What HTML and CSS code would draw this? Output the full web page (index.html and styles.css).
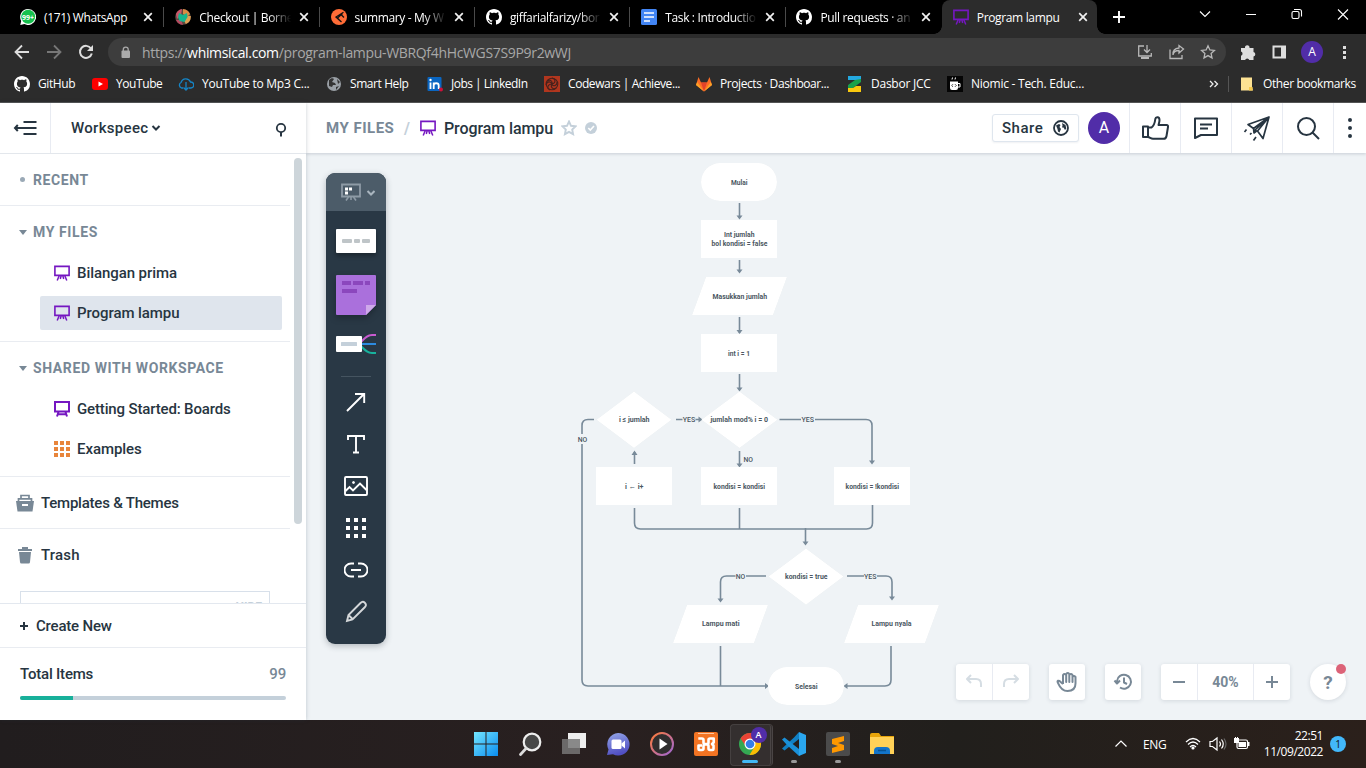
FILE: index.html
```html
<!DOCTYPE html>
<html lang="en">
<head>
<meta charset="utf-8">
<title>Program lampu</title>
<link rel="stylesheet" href="styles.css">
</head>
<body>
<svg class="defs" width="0" height="0">
  <symbol id="x" viewBox="0 0 16 16"><path d="M4.2 4.2l7.6 7.6M11.8 4.2l-7.6 7.6" stroke="#f1f1f1" stroke-width="1.7"/></symbol>
  <symbol id="github" viewBox="0 0 16 16"><path fill="#fff" d="M8 0C3.58 0 0 3.58 0 8c0 3.54 2.29 6.53 5.47 7.59.4.07.55-.17.55-.38 0-.19-.01-.82-.01-1.49-2.01.37-2.53-.49-2.69-.94-.09-.23-.48-.94-.82-1.13-.28-.15-.68-.52-.01-.53.63-.01 1.08.58 1.23.82.72 1.21 1.87.87 2.33.66.07-.52.28-.87.51-1.07-1.78-.2-3.64-.89-3.64-3.95 0-.87.31-1.59.82-2.15-.08-.2-.36-1.02.08-2.12 0 0 .67-.21 2.2.82.64-.18 1.32-.27 2-.27s1.36.09 2 .27c1.53-1.04 2.2-.82 2.2-.82.44 1.1.16 1.92.08 2.12.51.56.82 1.27.82 2.15 0 3.07-1.87 3.75-3.65 3.95.29.25.54.73.54 1.48 0 1.07-.01 1.93-.01 2.2 0 .21.15.46.55.38A8.01 8.01 0 0 0 16 8c0-4.42-3.58-8-8-8z"/></symbol>
  <symbol id="board" viewBox="0 0 16 16"><path d="M.9 1.4h14.2v9H.9z" fill="none" stroke="#7517c1" stroke-width="1.6"/><path d="M5.3 10.5L3.2 15.500M7.200 10.5l-.9 3.500M8.800 10.5l.9 3.500M10.7 10.5l2.1 5" stroke="#7517c1" stroke-width="1.5"/></symbol>
</svg>

<header class="browser">
  <div class="tabs">
    <div class="tab"><svg class="fav" viewBox="0 0 16 16"><path d="M8 0a8 8 0 1 1-3.6 15.1L.3 16l.9-4A8 8 0 0 1 8 0z" fill="#fff"/><circle cx="8.2" cy="7.8" r="7" fill="#16c04e"/><text x="8.1" y="10.6" font-size="7.5" font-weight="700" text-anchor="middle" fill="#fff" textLength="12" lengthAdjust="spacingAndGlyphs">99+</text></svg><span class="t1">(171) WhatsApp</span><svg class="close"><use href="#x"/></svg></div>
    <div class="tab"><svg class="fav" viewBox="0 0 16 16"><circle cx="8" cy="8" r="7.8" fill="#5c4a40"/><path d="M1 5a8 8 0 0 1 6-5l-1 6-4 4z" fill="#c9566a"/><path d="M8 0a8 8 0 0 1 7 5l-3 3-4-3z" fill="#d98b44"/><path d="M15.8 7a8 8 0 0 1-5 8l-2-4 4-4z" fill="#dfa155"/><path d="M1 11l5 0 2 5a8 8 0 0 1-7-5z" fill="#b44a60"/><path d="M4 4l4 2 4-2 .5 4-3 5-5-1-1.500-4z" fill="#16b58e"/></svg><span>Checkout | Borne</span><svg class="close"><use href="#x"/></svg></div>
    <div class="tab"><svg class="fav" viewBox="0 0 16 16"><circle cx="8" cy="8" r="8" fill="#ff6c37"/><path d="M12.500 3.300L5 8l5.500 5M11.500 4.500L6.500 9l2 2.200M10 5.500l3 3" fill="none" stroke="#111" stroke-width="1.300"/></svg><span>summary - My W</span><svg class="close"><use href="#x"/></svg></div>
    <div class="tab"><svg class="fav"><use href="#github"/></svg><span>giffarialfarizy/bor</span><svg class="close"><use href="#x"/></svg></div>
    <div class="tab"><svg class="fav" viewBox="0 0 16 16"><rect width="16" height="16" rx="1.500" fill="#4285f4"/><path d="M3 4h10M3 8h10M3 12h6" stroke="#fff" stroke-width="1.700"/></svg><span>Task : Introductio</span><svg class="close"><use href="#x"/></svg></div>
    <div class="tab"><svg class="fav"><use href="#github"/></svg><span>Pull requests · an</span><svg class="close"><use href="#x"/></svg></div>
    <div class="tab active"><svg class="fav"><use href="#board"/></svg><span>Program lampu</span><svg class="close"><use href="#x"/></svg></div>
    <svg class="plus" viewBox="0 0 14 14"><path d="M7 1v12M1 7h12" stroke="#fff" stroke-width="1.900"/></svg>
    <svg class="wincontrols" width="156" height="28" viewBox="0 0 156 28"><g fill="none" stroke="#fff" stroke-width="1.100"><path d="M4 11.500l5 5 5-5M50 14.500h10"/><rect x="96" y="11.500" width="7" height="7" rx="1.500"/><path d="M98 9.500h5.500a2 2 0 0 1 2 2v5"/><path d="M142 9.500l10 10M152 9.500l-10 10"/></g></svg>
  </div>
  <div class="toolbar">
    <svg class="nav" width="108" height="36" viewBox="0 0 108 36"><g fill="none" stroke="#dedede" stroke-width="1.800"><path d="M29 18H16M22 11.500L15.500 18l6.500 6.500"/><path d="M47 18h13M54 11.500l6.500 6.500-6.500 6.500" stroke="#777"/><path d="M91 14.500a6 6 0 1 0 .8 5" stroke-width="2"/></g><path d="M93 11v6h-6z" fill="#dedede"/></svg>
    <div class="omnibox">
      <svg width="10" height="13" viewBox="0 0 10 13"><rect x=".5" y="4.500" width="8.500" height="7.500" rx="1" fill="#aaa"/><path d="M2.300 5V3.500a2.400 2.400 0 0 1 4.900 0V5" fill="none" stroke="#aaa" stroke-width="1.300"/></svg>
      <div class="url">https://<b>whimsical.com</b>/program-lampu-WBRQf4hHcWGS7S9P9r2wWJ</div>
      <svg width="86" height="16" viewBox="0 0 86 16"><g fill="none" stroke="#b8b8b8" stroke-width="1.300"><path d="M7 2H1.700v10h12.600V9M4 13.900h8M10 1v7M7 5.500l3 3 3-3"/><path d="M33 5.500v9h12V11M36 11c.3-3 2.500-4.500 6-4.500V9l4.500-4L42 1.500V4c-4 .3-6.300 3-6 7z"/><path d="M71 1.800l1.900 4.100 4.500.5-3.300 3 .9 4.500-4-2.300-4 2.300.9-4.500-3.300-3 4.500-.5z"/></g><path d="M4 13h8v2H4z" fill="#b8b8b8"/></svg>
    </div>
    <svg class="ext" width="50" height="18" viewBox="0 0 50 18"><path d="M2 5h4a2.300 2.300 0 1 1 4.500 0h4v4a2.300 2.300 0 0 1 0 4.500v3.500h-4.200a2.200 2.200 0 0 0-4.200 0H2v-4.200a2.200 2.200 0 0 0 0-4.200z" fill="#dedede"/><path d="M34.500 3.500h11.500v11H34.500z" fill="none" stroke="#dedede" stroke-width="2"/><path d="M42 3h5v12h-5z" fill="#dedede"/></svg>
    <span class="profile">A</span>
    <i class="dots"></i>
  </div>
  <nav class="bookmarks">
    <a><svg><use href="#github"/></svg><span>GitHub</span></a>
    <a><svg viewBox="0 0 16 16"><rect y="2" width="16" height="12" rx="3" fill="#f00"/><path d="M6.500 5.500l4.500 2.500-4.500 2.500z" fill="#fff"/></svg><span>YouTube</span></a>
    <a class="mp3"><svg viewBox="0 0 16 16"><path d="M5 12H3.500a3 3 0 0 1-.5-5.500A5 5 0 0 1 12.500 6 3 3 0 0 1 13 12h-2M8 6v8M5.500 11.500L8 14l2.500-2.500" fill="none" stroke="#1585c7" stroke-width="1.300"/></svg><span>YouTube to Mp3 C...</span></a>
    <a><svg viewBox="0 0 16 16"><circle cx="8" cy="8" r="7" fill="#9aa0a6"/><path d="M3 4c2-2 4-2 5-1l-2 3 3 1 1 2H7l-1 2-3-1zM11 3l3 3-2 2zM10 11l3-1-3 4z" fill="#333"/></svg><span>Smart Help</span></a>
    <a class="jobs"><svg viewBox="0 0 16 16"><rect x=".5" y="1" width="14" height="14" rx="1" fill="#0a66c2"/><path d="M3.500 6.500V13M6.700 6.500V13M6.700 9.500c0-3 5-3 5 0V13" fill="none" stroke="#fff" stroke-width="1.800"/><circle cx="3.500" cy="4" r="1.200" fill="#fff"/><circle cx="14" cy="13.500" r="2" fill="#d0103a"/></svg><span>Jobs | LinkedIn</span></a>
    <a><svg viewBox="0 0 16 16"><rect width="16" height="16" fill="#b1361e"/><g fill="none" stroke="#47221d" stroke-width="1.100"><circle cx="8" cy="8" r="5.800"/><path d="M3 5c3-2 6 0 5 3M8 2c4 1 4 5 0 6M13 6c0 4-4 5-5 2M12 12c-3 2-6-1-4-4M6 14c-4-2-2-6 2-6M2 9c1-4 5-4 6-1"/></g></svg><span>Codewars | Achieve...</span></a>
    <a><svg viewBox="0 0 16 16"><path d="M0 9l2.500-8L5 6.500h6L13.500 1 16 9l-8 6.500z" fill="#fc6d26"/><path d="M5 6.500h6l-3 9z" fill="#e24329"/><path d="M0 9l1.200-3L8 15.500z" fill="#fca326"/><path d="M16 9l-1.200-3L8 15.500z" fill="#fca326"/></svg><span>Projects · Dashboar...</span></a>
    <a class="jcc"><svg viewBox="0 0 16 16"><path d="M1 0h13v4L9 8H5l4-4H1z" fill="#24a9e1"/><path d="M14 3v3L6 12H1V9l7-5z" fill="#19a14b"/><path d="M1 12h5l3-2h5v6H1z" fill="#f9c80e"/></svg><span>Dasbor JCC</span></a>
    <a class="niomic"><svg viewBox="0 0 16 16"><rect width="16" height="16" fill="#050505"/><path d="M3 5.500h8v6.500q0 2-2 2H5q-2 0-2-2z" fill="#fff"/><path d="M11 7.500h2v3.500h-2M5.500 1.500l-.5 2M8.500 1.500l-.5 2" fill="none" stroke="#fff"/><path d="M6 8.200l-1.300 1.300L6 10.800M8 8.200l1.300 1.300L8 10.800" fill="none" stroke="#111" stroke-width=".8"/></svg><span>Niomic - Tech. Educ...</span></a>
    <svg class="more" width="10" height="10" viewBox="0 0 10 10"><path d="M1 2l3 3-3 3M5.500 2l3 3-3 3" fill="none" stroke="#eee" stroke-width="1.300"/></svg>
    <a class="other"><svg viewBox="0 0 16 16"><path d="M2 1.500h11v9l1 4H2z" fill="#fde293"/><path d="M10 11h3.500v3.500H10z" fill="#f4c84b"/></svg><span>Other bookmarks</span></a>
  </nav>
</header>

<div class="app">
  <aside class="sidebar">
    <div class="side-head">
      <span class="collapse"><svg width="26" height="16" viewBox="0 0 26 16"><path d="M10.500 2h13M3 8h20.500M10.500 14h13M4.800 5L2 8l2.800 3" fill="none" stroke="#273541" stroke-width="2"/></svg></span>
      <strong>Workspeec</strong>
      <svg class="chev" width="10" height="8" viewBox="0 0 10 8"><path d="M1.500 2L5 5.500 8.500 2" fill="none" stroke="#273541" stroke-width="2"/></svg>
      <svg class="find" width="12" height="16" viewBox="0 0 12 16"><circle cx="6" cy="6" r="4.200" fill="none" stroke="#273541" stroke-width="1.800"/><path d="M6 10v4.500" stroke="#273541" stroke-width="2"/></svg>
    </div>
    <div class="side-body">
      <div class="sections">
        <section class="row"><i class="bullet"></i><h3>RECENT</h3></section>
        <section class="group">
          <div class="row"><i class="tri"></i><h3>MY FILES</h3></div>
          <div class="file"><svg><use href="#board"/></svg><span>Bilangan prima</span></div>
          <div class="file selected"><svg><use href="#board"/></svg><span>Program lampu</span></div>
        </section>
        <section class="group">
          <div class="row"><i class="tri"></i><h3>SHARED WITH WORKSPACE</h3></div>
          <div class="file tight"><svg viewBox="0 0 16 16"><path d="M1 1h14v9.500H1zM4.500 11L3 15.500M11.500 11l1.500 4.500M4 13.300h8" fill="none" stroke="#7517c1" stroke-width="2"/></svg><span>Getting Started: Boards</span></div>
          <div class="file"><svg viewBox="0 0 16 16"><path d="M0 2h16M0 8h16M0 14h16" stroke="#e8853b" stroke-width="4" stroke-dasharray="4 2"/></svg><span>Examples</span></div>
        </section>
        <section class="row big"><svg width="18" height="18" viewBox="0 0 18 18"><path d="M5 5V1.500h8V5M2.500 7V4.800h13V7" fill="none" stroke="#788896" stroke-width="1.700"/><path d="M0 7h18l-1.500 10.500h-15z" fill="#788896"/><path d="M6 11h6" stroke="#fff" stroke-width="2"/></svg><span>Templates &amp; Themes</span></section>
        <section class="row big last"><svg width="18" height="18" viewBox="0 0 18 18"><path d="M2 3h4V1h6v2h4v2H2zM3 6h12l-1 10q0 1.500-1.500 1.500h-7Q4 17.500 4 16z" fill="#788896"/></svg><span>Trash</span></section>
        <div class="card"><span>HIDE</span></div>
      </div>
      <i class="scroll"></i>
    </div>
    <div class="create"><svg width="8" height="8" viewBox="0 0 8 8"><path d="M4 0v8M0 4h8" stroke="#273541" stroke-width="2"/></svg><span>Create New</span></div>
    <div class="total"><div><span>Total Items</span><b>99</b></div><p><i></i></p></div>
  </aside>

  <main class="main">
    <div class="top">
      <span class="crumb">MY FILES</span><span class="slash">/</span>
      <svg width="16" height="16"><use href="#board"/></svg>
      <strong>Program lampu</strong>
      <svg class="star" width="16" height="16" viewBox="0 0 16 16"><path d="M8 1.500l2 4.300 4.600.5-3.400 3.200.9 4.700L8 11.900l-4.100 2.300.9-4.700L1.400 6.300 6 5.800z" fill="none" stroke="#c4d0da" stroke-width="1.900"/></svg>
      <svg class="check" width="12" height="12" viewBox="0 0 12 12"><circle cx="6" cy="6" r="6" fill="#c4d0da"/><path d="M3.300 6l2 2 3.700-4" fill="none" stroke="#fff" stroke-width="1.600"/></svg>
      <button class="share">Share <svg width="16" height="16" viewBox="0 0 16 16"><circle cx="8" cy="8" r="7" fill="none" stroke="#273541" stroke-width="1.800"/><path d="M3 5.500l3-1.500 1.500 1-1 2 1.500 2-1.500 3.500-1.500-1-.5-2.500zM9 3l3.500 2 .8 3.500-1.300 1.500-1.500-2.500L9 7.500l.5-2z" fill="#273541"/></svg></button>
      <span class="avatar">A</span>
      <span class="act"><svg viewBox="0 0 28 28"><path d="M2 12.500h5v10.500H2zM7 13.500h3.500c2-1.500 3.300-4 3.800-8.500.4-2.500 4.200-2.500 4.200 1 0 2-.5 3.500-1 5h8c1.300 0 1.700 1 1.500 2l-1.500 9c-.3 2-1 2.800-3 2.800H12c-2 0-3-1.300-5-1.800"/></svg></span>
      <span class="act"><svg viewBox="0 0 28 28"><path d="M3 4.500h22v16.500H9L3 24zM8 10.500h12M8 14.500h8"/></svg></span>
      <span class="act"><svg viewBox="0 0 28 28"><path stroke-width="1.700" d="M26 3L5 10.500l5.500 4L26 3 11 17M10.500 14.500L11 19l3-2.500M26 3L14.500 17l5.500 7.500L26 3zM3.500 15.500L1.500 18M8.500 19l-1.500 1.500M13 23l-2.500 3.500" /></svg></span>
      <span class="act"><svg viewBox="0 0 28 28"><circle cx="12.500" cy="12.500" r="8.500"/><path d="M18.500 18.500l6.500 6.500"/></svg></span>
      <span class="act kebab"><svg viewBox="0 0 6 28"><path d="M3 6v.01M3 14v.01M3 22v.01" stroke-width="4" stroke-linecap="round"/></svg></span>
    </div>
    <div class="canvas">
      <svg class="diagram" width="1060" height="567" viewBox="306 153 1060 567">
        <g fill="none" stroke="#788a99" stroke-width="1.600">
          <path d="M739.500 203v15M739.500 260v12M739.500 317v16M739.500 374v16M676 419.500h6.500M695.500 419.500h5M779.500 419.500H801M815 419.500h51q6 0 6 6V462M594 419.500h-6q-6 0-6 6V434M582 444v236q0 6 6 6h179M634.500 464V452M739.500 451v15M634.500 508v15q0 6 6 6h226q6 0 6-6v-18M739.500 508v21M805.500 528v16M766 576H746M735.500 576h-9q-6 0-6 6v19M847 576h17M877 576h9q6 0 6 6v17M720.500 646v40M891 646v34q0 6-6 6h-40"/>
        </g>
        <g fill="#788a99">
          <path id="dn" d="M736.500 215.500h6l-3 4z"/><use href="#dn" y="54"/><use href="#dn" y="114.500"/><use href="#dn" y="172"/><use href="#dn" y="248"/>
          <use href="#dn" x="132.500" y="245"/><use href="#dn" x="66" y="326"/><use href="#dn" x="-19" y="383"/><use href="#dn" x="152.500" y="381"/>
          <path d="M631.500 455h6l-3-4.500zM698.500 416.500l4 3-4 3zM765 683l4 3-4 3zM847.500 683l-4 3 4 3z"/>
        </g>
        <g class="shapes">
          <rect x="701" y="163" width="76" height="38" rx="19"/><rect x="701" y="220" width="76" height="38"/><path d="M706 277h81l-14 38h-81z"/><rect x="701" y="334" width="76" height="38"/>
          <path d="M739.500 391.500l38 28.300-38 28.300-38-28.300z"/><path d="M634 391.500l37.500 28.300-37.500 28.300-37.500-28.300z"/>
          <rect x="596" y="467" width="76" height="38"/><rect x="701" y="467" width="76" height="38"/><rect x="834" y="467" width="76" height="38"/>
          <path d="M806 548.500l37.500 28-37.500 28.300-37.500-28.300z"/><path d="M687 605h81l-14 38h-81zM858 605h81l-14 38h-81z"/><rect x="768" y="667" width="76" height="38" rx="19"/>
        </g>
        <g class="labels">
          <text x="731" y="184.500" textLength="16.500" lengthAdjust="spacingAndGlyphs">Mulai</text><text x="724" y="236.800" textLength="30.500" lengthAdjust="spacingAndGlyphs">Int jumlah</text><text x="711.500" y="246.300" textLength="56" lengthAdjust="spacingAndGlyphs">bol kondisi = false</text>
          <text x="712.500" y="298.500" textLength="54.500" lengthAdjust="spacingAndGlyphs">Masukkan jumlah</text><text x="728" y="355.500" textLength="22" lengthAdjust="spacingAndGlyphs">int i = 1</text><text x="619" y="422.300" textLength="30.500" lengthAdjust="spacingAndGlyphs">i ≤ jumlah</text><text x="710.500" y="422.300" textLength="57.500" lengthAdjust="spacingAndGlyphs">jumlah mod% i = 0</text>
          <text x="625" y="488.500" textLength="18.500" lengthAdjust="spacingAndGlyphs">i ← i+</text><text x="713.500" y="488.500" textLength="51.500" lengthAdjust="spacingAndGlyphs">kondisi = kondisi</text><text x="845.500" y="488.500" textLength="53.500" lengthAdjust="spacingAndGlyphs">kondisi = !kondisi</text>
          <text x="785" y="579" textLength="42.500" lengthAdjust="spacingAndGlyphs">kondisi = true</text><text x="702" y="626.300" textLength="37.500" lengthAdjust="spacingAndGlyphs">Lampu mati</text><text x="871.500" y="626.300" textLength="40" lengthAdjust="spacingAndGlyphs">Lampu nyala</text><text x="795" y="688.500" textLength="22.500" lengthAdjust="spacingAndGlyphs">Selesai</text>
          <g class="edge"><text x="682.700" y="422.300" textLength="12.500" lengthAdjust="spacingAndGlyphs">YES</text><text x="801.500" y="422.300" textLength="12.500" lengthAdjust="spacingAndGlyphs">YES</text><text x="577.700" y="442" textLength="9.500" lengthAdjust="spacingAndGlyphs">NO</text><text x="743.500" y="462" textLength="9.500" lengthAdjust="spacingAndGlyphs">NO</text><text x="735.700" y="579" textLength="9.500" lengthAdjust="spacingAndGlyphs">NO</text><text x="864" y="579" textLength="12.500" lengthAdjust="spacingAndGlyphs">YES</text></g>
        </g>
      </svg>

      <div class="palette">
        <div class="mode"><svg width="34" height="18" viewBox="0 0 34 18"><path d="M1 1.500h18v12H1z" fill="none" stroke="#8e9ba6" stroke-width="1.800"/><path d="M7.500 14L5 17.500M10 14v3M12.500 14l2.500 3.500" stroke="#8e9ba6" stroke-width="1.600"/><path d="M4 4.500h3v3H4zM8 4.500h3v3H8zM4 8.500h3v3H4z" fill="#fff"/><path d="M26.500 8l3.500 3.500L33.500 8" fill="none" stroke="#a9b5bf" stroke-width="2"/></svg></div>
        <div class="shape"><i></i><i></i><i></i></div>
        <svg class="sticky" width="40" height="40" viewBox="0 0 40 40"><path d="M1 0h38q1 0 1 1v29L30 40H1q-1 0-1-1V1q0-1 1-1z" fill="#aa70dc"/><path d="M30 30h10L30 40z" fill="#cfa9ea"/><path d="M6 6h9v4H6zM17 6h10v4H17zM29 6h5v4h-5zM6 14h15v4H6z" fill="#8b47bd"/></svg>
        <svg class="mind" width="40" height="22" viewBox="0 0 40 22"><g fill="none" stroke-width="2"><path d="M25 9c4-4 6-7 11-7h4" stroke="#c85bd0"/><path d="M25 11h15" stroke="#2d8be0"/><path d="M25 13c4 4 6 7 11 7h4" stroke="#18b29d"/></g><rect y="3" width="26" height="16" rx="1" fill="#fff"/><rect x="5" y="9" width="16" height="4" rx=".5" fill="#c4d0da"/></svg>
        <hr>
        <svg class="tool" viewBox="0 0 24 24"><path d="M3 21L20 4M11 4h9.200v9"/></svg>
        <svg class="tool" viewBox="0 0 24 24"><path d="M4 8V4h16v4M12 4v16.500M9 20.500h6"/></svg>
        <svg class="tool" viewBox="0 0 24 24"><rect x="1" y="3" width="22" height="18" rx="1"/><path d="M1.500 17l4-4 3.500 3.500 7-7 6.500 6.500"/><circle cx="9.500" cy="8.500" r="1" fill="#fff" stroke-width="1"/></svg>
        <svg class="tool" viewBox="0 0 24 24"><path d="M2 4h20M2 12h20M2 20h20" stroke-width="4" stroke-dasharray="4 4"/></svg>
        <svg class="tool" viewBox="0 0 24 24"><path d="M10 5.500H7a6 6 0 0 0 0 13h3M14 5.500h3a6 6 0 0 1 0 13h-3M7 12h10"/></svg>
        <svg class="tool pencil" viewBox="0 0 24 24"><path d="M3 21l1.500-6L16.500 3c3-3 7 1 4.500 4L8.500 19.500zM4.500 15l4 4"/></svg>
      </div>

      <div class="controls">
        <div class="btns undo"><span><svg width="18" height="16" viewBox="0 0 18 16"><path d="M6 1L2 5l4 4M2 5h9q5 0 5 5v3"/></svg></span><span><svg width="18" height="16" viewBox="0 0 18 16"><path d="M12 1l4 4-4 4M16 5H7q-5 0-5 5v3"/></svg></span></div>
        <div class="btns"><span><svg width="22" height="22" viewBox="0 0 22 22"><path d="M7 13L3.500 10q-2-1-2 .8c1.500 3 3 9.200 10 9.200 5 0 8-2.500 8-7.500V6q-1.700-2-3 0v5V4q-1.500-2-3.200 0v7V3q-1.500-2-3.100 0v8V4Q8.500 2 7 4v9"/></svg></span></div>
        <div class="btns"><span><svg width="20" height="20" viewBox="0 0 20 20"><path d="M4 12V9a7 7 0 1 1 3 6.500M1.500 8.500L4 11.500l3-3M11 5.500v5l3 1.500"/></svg></span></div>
        <div class="btns zoom"><span><svg width="14" height="14" viewBox="0 0 14 14"><path d="M1 7h12"/></svg></span><span class="pct">40%</span><span><svg width="14" height="14" viewBox="0 0 14 14"><path d="M1 7h12M7 1v12"/></svg></span></div>
        <div class="help">?<i></i></div>
      </div>
    </div>
  </main>
</div>

<footer class="taskbar">
  <div class="apps">
    <span><svg viewBox="0 0 24 24"><linearGradient id="w" x2="1" y2="1"><stop stop-color="#74e6ff"/><stop offset="1" stop-color="#0a8df0"/></linearGradient><path d="M0 0h11.500v11.500H0zM12.500 0H24v11.500H12.500zM0 12.500h11.500V24H0zM12.500 12.500H24V24H12.500z" fill="url(#w)"/></svg></span>
    <span><svg viewBox="0 0 24 24"><circle cx="14" cy="10" r="8.300" fill="#474747" stroke="#eee" stroke-width="2.200"/><path d="M8 16.500l-5.500 6" stroke="#ddd" stroke-width="2.700" stroke-linecap="round"/></svg></span>
    <span><svg viewBox="0 0 24 24"><path d="M6 1h18v15H6z" fill="#eee"/><path d="M0 7h18v15H0z" fill="#777" opacity=".85"/></svg></span>
    <span><svg viewBox="0 0 24 24"><linearGradient id="m" y2="1" x2=".3"><stop stop-color="#95a8e8"/><stop offset="1" stop-color="#514fc3"/></linearGradient><path d="M12 1a11.300 11.300 0 1 1-5 21.300L1 23l1.500-5.500A11.300 11.300 0 0 1 12 1z" fill="url(#m)"/><rect x="5.500" y="7.500" width="10" height="9.500" rx="1.500" fill="#fff"/><path d="M15.500 11.500L19 8.500v8l-3.500-3z" fill="#fff"/></svg></span>
    <span><svg viewBox="0 0 24 24"><linearGradient id="p" x2="1" y2="1"><stop stop-color="#ff7b36"/><stop offset="1" stop-color="#9c66d6"/></linearGradient><circle cx="12" cy="12" r="11" fill="#302e2e" stroke="url(#p)" stroke-width="2"/><path d="M9.500 6.500l8 5.500-8 5.500z" fill="#fff"/></svg></span>
    <span><svg viewBox="0 0 24 24"><rect width="24" height="24" rx="2" fill="#f37423"/><path d="M4 1.500h16" stroke="#ffc79e" stroke-width="1"/><g fill="none" stroke="#fff" stroke-width="2.600" stroke-linejoin="round"><path d="M4.300 6.500H8q1.500 0 1.500 1.500v2.500q0 1.500 1.500 1.500h2q1.500 0 1.500-1.500V8q0-1.500 1.500-1.500h3.700v4L18 12l1.500 1.500V17q0 1-1 1H16q-1.500 0-1.500-1.500V14q0-1.500-1.500-1.500h-2q-1.500 0-1.500 1.500v2.500Q9.500 18 8 18H5.500q-1 0-1-1v-3.500H8"/></g></svg></span>
    <span class="chrome"><svg viewBox="0 0 24 24"><circle cx="12" cy="12" r="11" fill="#34a853"/><path d="M2.500 6.500A11 11 0 0 1 21.500 6.500L12 7l-4 7.500z" fill="#ea4335"/><path d="M21.500 6.500A11 11 0 0 1 11.500 23L17 14V6.500z" fill="#fbbc04"/><circle cx="12" cy="12" r="5.500" fill="#fff"/><circle cx="12" cy="12" r="4.300" fill="#357ee8"/></svg><b>A</b><em></em></span>
    <span><svg viewBox="0 0 24 24"><path d="M17 0v7L2.500 18.500l-2.500-2 12-11z" fill="#1180c4"/><path d="M0 7.500l2.500-2L17 17v7L5 13z" fill="#1a90d8"/><path d="M17 0l7 3v18l-7 3z" fill="#2aa6ee"/></svg><i></i></span>
    <span><svg viewBox="0 0 24 24"><rect width="24" height="24" rx="2" fill="#4b4b4b"/><path d="M18 4v5l-6 2 6 2v5L6 21v-5l6-2-6-2V7z" fill="#ff9800"/></svg><i></i></span>
    <span><svg viewBox="0 0 24 24"><path d="M0 3q0-2 2-2h7l2 3h13v4H0z" fill="#e7a40a"/><path d="M0 5h24v17H0z" fill="#ffd157"/><path d="M4 22v-3q0-4 4-4h8q4 0 4 4v3z" fill="#1374c9"/><path d="M8 18.500h8" stroke="#075393" stroke-width="1.500"/></svg></span>
  </div>
  <div class="tray">
    <svg width="12" height="8" viewBox="0 0 12 8"><path d="M.5 6.500L6 1l5.500 5.500" fill="none" stroke="#fff" stroke-width="1.200"/></svg>
    <span class="eng">ENG</span>
    <svg class="status" width="66" height="16" viewBox="0 0 66 16"><g fill="none" stroke="#fff" stroke-width="1.200"><path d="M1 6q7-7 14 0M3 8.500q5-5 10 0M5 11q3-3 6 0"/><path d="M25 5.500h2.500L32 2v12l-4.500-3.500H25zM34.500 5.500q2 2.500 0 5M36.500 3.500q3.500 4.500 0 9"/><path d="M39 2.500q4 5.500 0 11" stroke="#666"/><rect x="52" y="4" width="10.500" height="8.500" rx="1.500"/></g><circle cx="8" cy="12" r="1.600" fill="#fff"/><path d="M49 2h5v5h-5zM53.500 6h7.500v5h-7.500zM63 6h1.500v4H63zM50 1h1v2h-1zM52 1h1v2h-1z" fill="#fff"/></svg>
    <div class="clock"><div>22:51</div><div>11/09/2022</div></div>
    <span class="badge">1</span>
  </div>
</footer>
</body>
</html>
```
FILE: styles.css
```css
* { box-sizing: border-box; }
body { margin: 0; width: 1366px; height: 768px; overflow: hidden; display: flex; flex-direction: column; font-family: Roboto, "Liberation Sans", sans-serif; color: #273541; }
svg { flex: none; display: block; }
.defs { position: absolute; }
h3, p { margin: 0; }

/* Browser frame */
.browser { height: 103px; flex: none; background: #2c2c2c; border-bottom: 1px solid #555; color: #fff; font: 12px "Open Sans", "Noto Sans", sans-serif; }
.tabs { height: 34px; background: #000; display: flex; align-items: center; padding-left: 9px; }
.tab { width: 155.300px; flex: none; height: 34px; padding-left: 11px; display: flex; align-items: center; position: relative; }
.fav { width: 16px; height: 16px; }
.tab span { width: 95px; margin: 0 2px 0 8px; white-space: nowrap; letter-spacing: -.35px; mask-image: linear-gradient(90deg, #000 74%, transparent 98%); }
.tab .t1, .tab.active span { mask-image: none; }
.close { width: 16px; height: 16px; margin-left: 1px; }
.tab:nth-child(-n+5)::after { content: ""; width: 1px; height: 20px; background: #4a4a4a; margin-left: 7px; }
.tab.active { background: #2c2c2c; border-radius: 8px 8px 0 0; margin-left: 1px; }
.tab.active::before, .tab.active::after { content: ""; position: absolute; bottom: 0; width: 8px; height: 8px; }
.tab.active::before { left: -8px; background: radial-gradient(circle at 0 0, transparent 7.500px, #2c2c2c 8px); }
.tab.active::after { right: -8px; background: radial-gradient(circle at 100% 0, transparent 7.500px, #2c2c2c 8px); }
.plus { width: 14px; height: 14px; margin-left: 15px; }
.wincontrols { margin-left: auto; margin-right: 14px; margin-bottom: 6px; }
.toolbar { height: 36px; display: flex; align-items: center; }
.omnibox { width: 1118px; flex: none; height: 28px; border-radius: 14px; background: #3d3d3d; display: flex; align-items: center; padding: 0 6px 0 13px; }
.url { flex: 1; margin-left: 11px; font-size: 14px; letter-spacing: -.33px; color: #a8a8a8; }
.url b { font-weight: 400; color: #fff; }
.omnibox > svg:last-child { margin-right: -3px; }
.ext { margin-left: 13px; }
.profile { width: 22px; height: 22px; flex: none; border-radius: 50%; background: #512da8; margin-left: 12px; text-align: center; line-height: 22px; }
.dots { width: 3px; height: 15px; margin-left: 20px; background: radial-gradient(circle, #dedede 1.500px, transparent 1.800px) 0 0 / 3px 5px; }
.bookmarks { height: 30px; display: grid; grid-template-columns: 78px 86px 148px 101px 117px 152px 151px 100px 262px 19px 1fr; align-items: center; padding: 0 0 3px 14px; }
.bookmarks a { display: flex; align-items: center; gap: 8px; white-space: nowrap; letter-spacing: -.42px; }
.bookmarks a svg { width: 16px; height: 16px; }
.bookmarks .mp3, .bookmarks .jcc { letter-spacing: -.25px; }
.bookmarks .jobs { letter-spacing: -.5px; }
.bookmarks .niomic { letter-spacing: -.25px; }
.bookmarks .other { border-left: 1px solid #555; padding-left: 10px; letter-spacing: -.38px; height: 16px; }

/* App shell */
.app { flex: 1; min-height: 0; display: flex; }
.sidebar { width: 306px; display: flex; flex-direction: column; background: #fff; box-shadow: 0 0 4px rgba(40,60,80,.25); z-index: 2; font-weight: 500; font-size: 15px; }
.side-head { height: 51px; flex: none; display: flex; align-items: center; border-bottom: 1px solid #e3e7ec; }
.collapse { width: 51px; height: 50px; border-right: 1px solid #e8ebf2; display: flex; align-items: center; padding-left: 13px; }
.side-head strong { margin-left: 20px; font-weight: 500; font-size: 15px; letter-spacing: .3px; width: 76px; white-space: nowrap; }
.chev { margin-left: 4px; }
.find { margin-left: 114px; margin-top: 4px; }
.side-body { flex: 1; min-height: 0; overflow: hidden; display: flex; }
.sections { width: 290px; }
.sections section { border-bottom: 1px solid #e9ecf1; }
.row { height: 52px; display: flex; align-items: center; padding-left: 19px; }
.row h3 { font-size: 14px; font-weight: 700; letter-spacing: .6px; color: #788896; }
.bullet { width: 5px; height: 5px; border-radius: 50%; background: #9aa9b6; margin: 0 8px 0 1px; }
.tri { border: 4px solid transparent; border-top: 5px solid #788896; border-bottom: 0; margin-right: 6px; }
.group { height: 136px; }
.group + .group { height: 135px; }
.group .row { height: 50px; padding-top: 2px; }
.file { height: 34px; width: 242px; margin: 0 0 6px 40px; padding-left: 14px; display: flex; align-items: center; gap: 7px; border-radius: 2px; letter-spacing: -.07px; }
.file.tight { letter-spacing: -.15px; }
.file svg { width: 16px; height: 16px; }
.selected { background: #dfe5ed; }
.row.big { padding-left: 16px; gap: 7px; letter-spacing: -.22px; }
.row.last { border: 0; letter-spacing: .2px; }
.card { width: 250px; height: 60px; margin: 10px 0 0 20px; border: 1px solid #d8e0ea; text-align: right; padding: 7px 7px; font-size: 12px; line-height: 16px; font-weight: 700; color: #c4d0da; }
.scroll { width: 8px; height: 366px; margin: 4px 0 0 4px; border-radius: 4px; background: #cdd5da; }
.create { height: 45px; flex: none; border-top: 1px solid #e3e8ef; border-bottom: 1px solid #e9ecf1; display: flex; align-items: center; gap: 8px; padding-left: 20px; letter-spacing: -.2px; }
.total { height: 72px; flex: none; padding: 17px 20px 0; letter-spacing: -.2px; }
.total div { display: flex; justify-content: space-between; }
.total b { font-weight: 500; color: #788896; }
.total p { height: 4px; border-radius: 2px; background: #c4d0da; margin-top: 13px; overflow: hidden; }
.total p i { display: block; width: 53px; height: 4px; background: #18b09a; }
.main { flex: 1; display: flex; flex-direction: column; }
.top { height: 50px; flex: none; background: #fff; display: flex; align-items: center; padding-left: 20px; box-shadow: 0 1px 3px rgba(40,60,80,.2); z-index: 1; }
.crumb { width: 70px; font-weight: 700; font-size: 15px; letter-spacing: .5px; color: #788896; white-space: nowrap; }
.slash { color: #c4d0da; font-weight: 700; width: 24px; padding-left: 8px; }
.top strong { font-weight: 500; font-size: 16px; letter-spacing: -.1px; margin-left: 8px; width: 110px; white-space: nowrap; }
.star { margin-left: 7px; }
.check { margin-left: 8px; }
.share { width: 87px; height: 28px; margin-left: auto; border: 1px solid #dfe6ee; border-radius: 3px; background: #fff; box-shadow: 0 1px 2px rgba(40,60,80,.07); display: flex; align-items: center; justify-content: space-between; padding: 0 9px; font: 500 15px Roboto, sans-serif; letter-spacing: .5px; color: #273541; }
.avatar { width: 32px; height: 32px; border-radius: 50%; background: #512da8; color: #fff; text-align: center; line-height: 32px; font-size: 16px; margin: 0 9px; }
.act { width: 51px; height: 50px; border-left: 1px solid #e8ebf2; display: flex; align-items: center; justify-content: center; }
.act svg { width: 28px; height: 28px; fill: none; stroke: #273541; stroke-width: 2; stroke-linejoin: round; }
.kebab { width: 33px; }
.kebab svg { width: 6px; }
.canvas { flex: 1; position: relative; background: #eff3f6; }
.diagram { position: absolute; left: 0; top: 0; }
.shapes { fill: #fff; filter: drop-shadow(0 .5px .5px rgba(40,60,80,.08)); }
.labels { font: 700 7.800px Roboto, sans-serif; fill: #4b5762; }
.edge { font-size: 8px; font-weight: 500; }

/* Floating tool palette */
.palette { position: absolute; left: 20px; top: 20px; width: 60px; height: 471px; border-radius: 9px; overflow: hidden; background: #293845; box-shadow: 0 2px 6px rgba(40,50,60,.3); display: flex; flex-direction: column; align-items: center; }
.mode { width: 60px; height: 38px; background: #4c5c69; display: flex; align-items: center; padding-left: 15px; }
.shape { width: 40px; height: 24px; margin: 18px 0 22px; flex: none; background: #fff; border-radius: 1px; box-shadow: 0 3px 4px rgba(0,0,0,.3); display: flex; align-items: center; gap: 2px; padding-left: 6px; }
.shape i { width: 10px; height: 4px; border-radius: 1px; background: #bfc5c8; }
.shape i:nth-child(2) { width: 6px; }
.shape i:nth-child(3) { width: 8px; }
.sticky { filter: drop-shadow(0 3px 3px rgba(0,0,0,.25)); }
.mind { margin-top: 18px; }
.palette hr { width: 30px; height: 1px; flex: none; border: 0; background: #455460; margin: 21px 0 13px; }
.tool { width: 24px; height: 24px; margin-bottom: 18px; fill: none; stroke: #fff; stroke-width: 1.900; }
.pencil { opacity: .8; }

/* Bottom controls */
.controls { position: absolute; right: 20px; bottom: 20px; display: flex; gap: 20px; color: #788896; }
.btns { height: 36px; display: flex; background: #fff; border-radius: 3px; box-shadow: 0 1px 4px rgba(40,60,80,.14); }
.btns span { width: 36px; display: flex; align-items: center; justify-content: center; }
.btns span + span { border-left: 1px solid #e8ebf2; width: 37px; }
.btns svg { fill: none; stroke: #788896; stroke-width: 2; stroke-linejoin: round; }
.undo svg { stroke: #d5dde3; }
.btns span.pct { width: 56px; font-weight: 700; font-size: 14px; }
.help { width: 36px; height: 36px; border-radius: 50%; background: #fff; box-shadow: 0 1px 4px rgba(40,60,80,.14); text-align: center; font: 700 19px/37px Roboto, sans-serif; position: relative; }
.help i { position: absolute; right: 0; top: 0; width: 10px; height: 10px; border-radius: 50%; background: #dc6378; }

/* Desktop taskbar */
.taskbar { height: 48px; flex: none; background: linear-gradient(90deg, #211d1e, #292020 45%, #211f1c 70%, #2b201b); display: flex; align-items: center; color: #fff; font: 12px "Open Sans", "Noto Sans", sans-serif; }
.apps { display: flex; margin-left: 463.500px; }
.apps span { width: 44px; height: 48px; display: flex; align-items: center; justify-content: center; position: relative; }
.apps svg { width: 24px; height: 24px; position: relative; }
.apps i { position: absolute; left: 19px; bottom: 5px; width: 6px; height: 3px; border-radius: 2px; background: #999; }
.chrome::before { content: ""; position: absolute; left: 2px; top: 4px; width: 39px; height: 40px; border: 1px solid #454040; border-right: 3px double #4a4545; border-radius: 4px; background: #342f2f; }
.chrome b { position: absolute; left: 23px; top: 7px; width: 16px; height: 16px; border-radius: 50%; background: #512da8; font-size: 9px; line-height: 16px; text-align: center; font-weight: 600; }
.chrome em { position: absolute; left: 14px; bottom: 5px; width: 16px; height: 3px; border-radius: 2px; background: #43b8f5; }
.tray { margin-left: auto; display: flex; align-items: center; padding-right: 20px; }
.eng { margin: 0 18px 0 16px; font-size: 12px; width: 24px; letter-spacing: -.4px; }
.clock { width: 68px; margin-left: 4px; text-align: right; line-height: 16px; letter-spacing: -.45px; }
.badge { width: 16px; height: 16px; border-radius: 50%; background: #42b8fb; color: #111; font-size: 10px; line-height: 16px; text-align: center; margin-left: 7px; }
```
